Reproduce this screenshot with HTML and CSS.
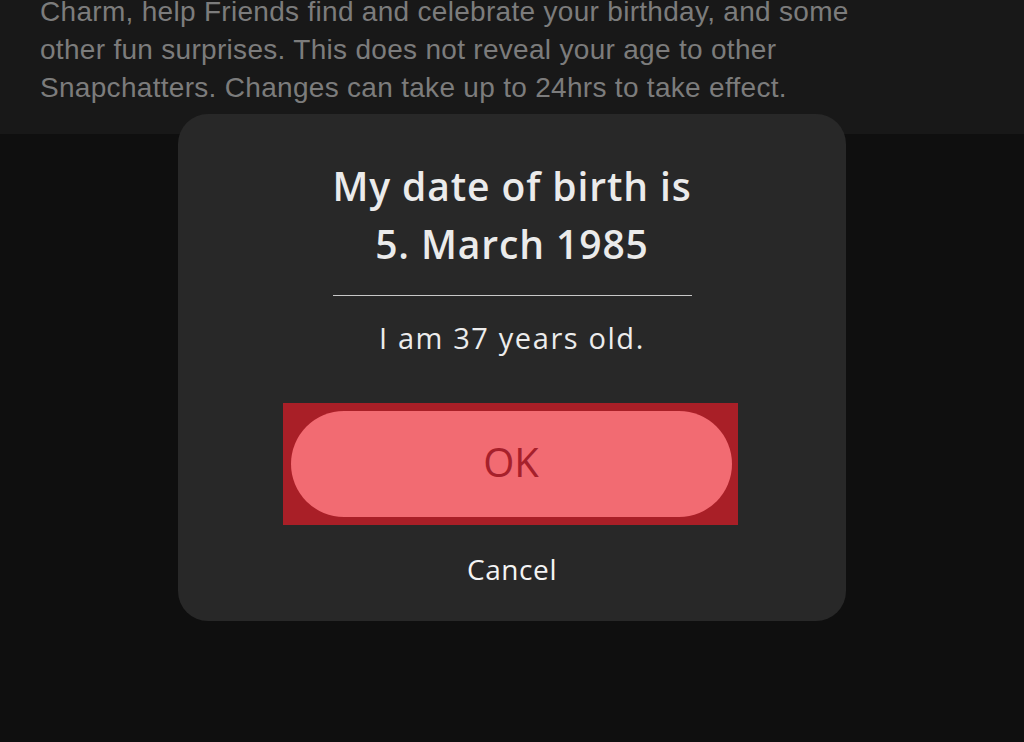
FILE: index.html
```html
<!DOCTYPE html>
<html>
<head>
<meta charset="utf-8">
<link rel="stylesheet" href="styles.css">
</head>
<body>
<div class="top">
  <p class="info">Charm, help Friends find and celebrate your birthday, and some<br>other fun surprises. This does not reveal your age to other<br>Snapchatters. Changes can take up to 24hrs to take effect.</p>
</div>
<div class="overlay">
  <div class="dialog">
    <h1 class="title">My date of birth is<br>5. March 1985</h1>
    <div class="rule"></div>
    <p class="age">I am 37 years old.</p>
    <div class="highlight">
      <button class="ok">OK</button>
    </div>
    <button class="cancel">Cancel</button>
  </div>
</div>
</body>
</html>
```
FILE: styles.css
```css
html, body {
  margin: 0;
  padding: 0;
  width: 1024px;
  height: 742px;
  overflow: hidden;
  background: #0f0f0f;
}
body {
  position: relative;
  font-family: "Liberation Sans", Arial, sans-serif;
}
.top {
  display: flow-root;
  height: 134px;
  background: #181818;
  box-sizing: border-box;
  padding-left: 40px;
}
.info {
  margin: -7px 0 0;
  color: #7c7c7c;
  font-size: 28px;
  line-height: 38px;
  letter-spacing: 0.3px;
}
.overlay {
  position: absolute;
  left: 0;
  top: 0;
  width: 1024px;
  height: 742px;
  display: flex;
  justify-content: center;
  padding-top: 114px;
  box-sizing: border-box;
}
.dialog {
  width: 668px;
  height: 507px;
  background: #282828;
  border-radius: 30px;
  display: flex;
  flex-direction: column;
  align-items: center;
  box-sizing: border-box;
  padding-top: 43px;
  font-family: "Open Sans", Lato, sans-serif;
}
.title {
  margin: 0;
  color: #ebebeb;
  font-size: 39px;
  font-weight: 600;
  line-height: 58px;
  letter-spacing: 0.9px;
  text-align: center;
}
.rule {
  width: 359px;
  height: 1px;
  background: #c8c8c8;
  margin-top: 22px;
}
.age {
  margin: 22px 0 0;
  color: #ececec;
  font-size: 29px;
  line-height: 40px;
  letter-spacing: 1.6px;
}
.highlight {
  margin-top: 45px;
  margin-left: -4px;
  width: 455px;
  height: 122px;
  background: #a91f27;
  box-sizing: border-box;
  padding: 8px 6px 8px 8px;
}
.ok {
  width: 100%;
  height: 100%;
  border: none;
  border-radius: 53px;
  background: #f26b72;
  color: #a6202b;
  font-family: "Open Sans", Lato, sans-serif;
  font-size: 40px;
  padding: 0 0 6px;
}
.cancel {
  margin-top: 26px;
  background: none;
  border: none;
  color: #f4f4f4;
  font-family: "Open Sans", Lato, sans-serif;
  font-size: 28px;
  font-weight: 500;
  letter-spacing: 0.6px;
  padding: 0;
  line-height: 36px;
}
```
